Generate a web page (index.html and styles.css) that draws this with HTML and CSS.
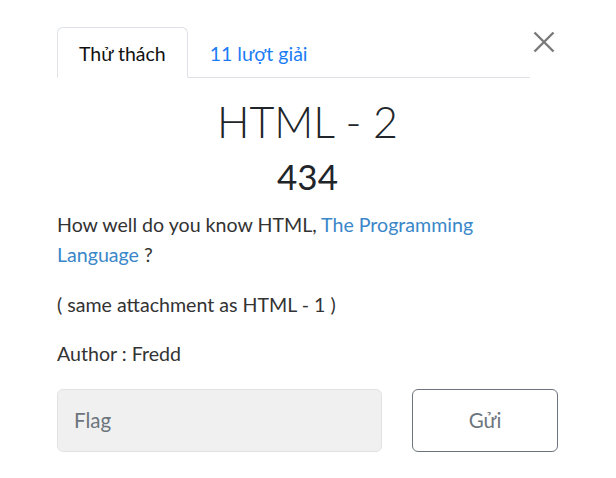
FILE: index.html
```html
<!DOCTYPE html>
<html lang="vi">
<head>
<meta charset="utf-8">
<link rel="stylesheet" href="styles.css">
</head>
<body>
<div class="modal-body">
  <div class="header">
    <ul class="tabs">
      <li class="tab active">Thử thách</li>
      <li class="tab link">11 lượt giải</li>
    </ul>
    <button class="close" aria-label="Close">
      <svg width="22" height="22" viewBox="0 0 22 22"><path d="M1.5 1.5L20.5 20.5M20.5 1.5L1.5 20.5" stroke="#7a7a7a" stroke-width="2.4" fill="none"/></svg>
    </button>
  </div>
  <h2 class="title">HTML - 2</h2>
  <h3 class="value">434</h3>
  <div class="desc">
    <p>How well do you know HTML, <a href="#">The Programming Language</a> ?</p>
    <p>( same attachment as HTML - 1 )</p>
    <p>Author : Fredd</p>
  </div>
  <div class="form-row">
    <div class="flag">Flag</div>
    <button class="submit">Gửi</button>
  </div>
</div>
</body>
</html>
```
FILE: styles.css
```css
* { box-sizing: border-box; }
body {
  margin: 0;
  background: #fff;
  font-family: Lato, "Noto Sans", sans-serif;
  color: #212529;
}
.modal-body {
  padding: 27px 58px 0 57px;
}
.header {
  display: flex;
  align-items: flex-start;
}
.tabs {
  flex: 1;
  display: flex;
  list-style: none;
  margin: 0;
  padding: 0;
  border-bottom: 1px solid #dee2e6;
}
.tab {
  height: 51px;
  padding: 0 21px;
  font-size: 19.5px;
  line-height: 52px;
  border: 1px solid transparent;
  border-top-left-radius: 6px;
  border-top-right-radius: 6px;
  margin-bottom: -1px;
}
.tab.active {
  border-color: #dee2e6 #dee2e6 #fff;
  background: #fff;
  color: #111;
}
.tab.link {
  color: #1a7cf5;
}
.close {
  width: 28px;
  height: 30px;
  padding: 0;
  margin: 0;
  border: 0;
  background: none;
  display: flex;
  justify-content: center;
  align-items: center;
}
.title {
  margin: 20px 0 0;
  text-align: center;
  font-size: 43px;
  font-weight: 300;
  line-height: 48px;
}
.value {
  margin: 10px 0 0;
  text-align: center;
  font-size: 35px;
  font-weight: 400;
  line-height: 40px;
}
.desc {
  margin-top: 14px;
  font-size: 19.6px;
  line-height: 30px;
  color: #333;
}
.desc p { margin: 0 0 19.5px; }
.desc a { color: #3a87c9; text-decoration: none; }
.form-row {
  display: flex;
  gap: 30px;
  margin-top: 0;
}
.flag {
  width: 325px;
  height: 63px;
  background: #f0f0f0;
  border: 1px solid #e2e2e2;
  border-radius: 6px;
  padding-left: 16px;
  display: flex;
  align-items: center;
  font-size: 20.5px;
  color: #6c757d;
}
.submit {
  flex: 1;
  height: 63px;
  background: #fff;
  border: 1px solid #6c757d;
  border-radius: 6px;
  font-family: inherit;
  font-size: 20.5px;
  color: #6c757d;
}
```
